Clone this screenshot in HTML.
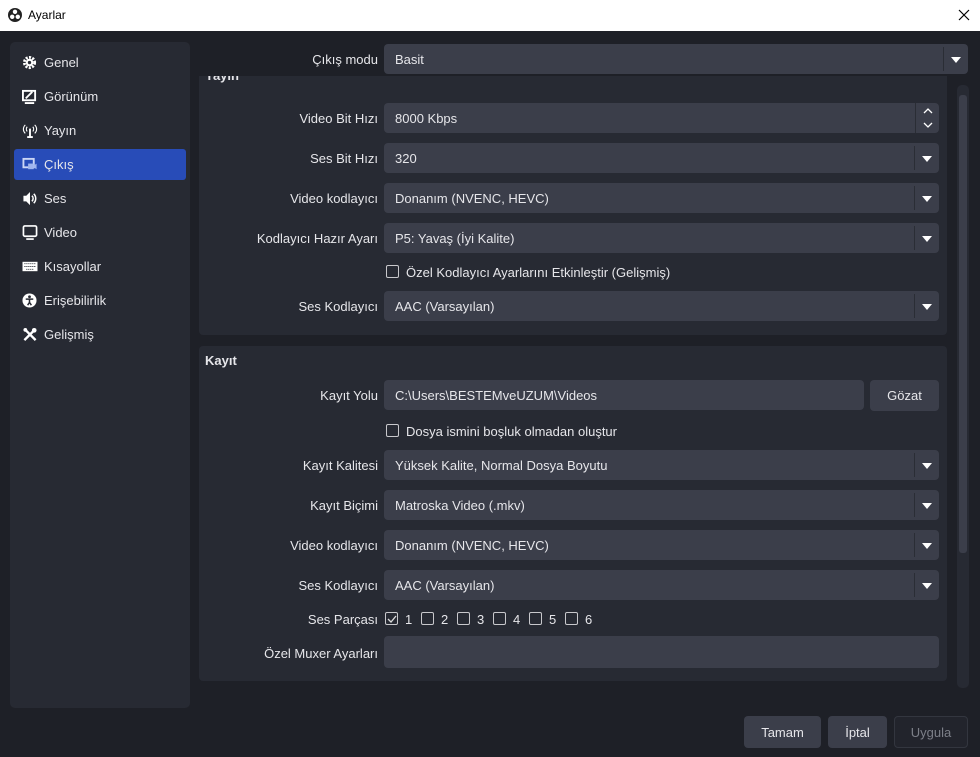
<!DOCTYPE html>
<html><head><meta charset="utf-8"><style>
*{box-sizing:border-box;margin:0;padding:0}
body{width:980px;height:757px;overflow:hidden;background:#1e2027;font-family:"Liberation Sans","DejaVu Sans",sans-serif;font-size:13px;color:#e6e6ea;position:relative}
.a{position:absolute}
.title{left:0;top:0;width:980px;height:31px;background:#fff;color:#000;font-size:12px}
.side{left:10px;top:42px;width:180px;height:666px;background:#272a33;border-radius:5px}
.item{position:absolute;left:4px;width:172px;height:31px;border-radius:3px;line-height:31px;padding-left:30px;font-size:13px}
.item svg{position:absolute;left:8px;top:8px}
.sel{background:#284cb8}
.lbl{position:absolute;right:602px;text-align:right;white-space:nowrap;margin-top:1px}
.in{position:absolute;left:384px;width:555px;height:30px;background:#3b3e4a;border-radius:4px;line-height:31px;padding-left:11px;white-space:nowrap}
.dd::after{content:"";position:absolute;right:0;top:3px;width:24px;height:24px;border-left:1px solid #2a2d35}
.dd::before{content:"";position:absolute;right:7px;top:13px;border-left:5px solid transparent;border-right:5px solid transparent;border-top:6px solid #fff}
.grp{background:#272a33;border-radius:4px}
.cb{position:absolute;width:13px;height:13px;border:1px solid #c8c8cc;border-radius:2px}
.btn{position:absolute;height:32px;top:716px;background:#3b3e4a;border-radius:4px;text-align:center;line-height:33px}
</style></head><body>
<div class="a title">
<svg class="a" style="left:8px;top:8px" width="14" height="14" viewBox="0 0 14 14"><circle cx="7" cy="7" r="7" fill="#222"/><circle cx="7" cy="3.8" r="2.2" fill="#fff"/><circle cx="4.2" cy="8.8" r="2.2" fill="#fff"/><circle cx="9.8" cy="8.8" r="2.2" fill="#fff"/></svg>
<span class="a" style="left:28px;top:8px">Ayarlar</span>
<svg class="a" style="left:958px;top:9px" width="12" height="12"><path d="M1 1L11 11M11 1L1 11" stroke="#000" stroke-width="1.2"/></svg>
</div>

<div class="a side">
<div class="item" style="top:5px"><svg width="15" height="15" viewBox="0 0 16 16"><circle cx="8" cy="8" r="5.5" fill="none" stroke="#fff" stroke-width="3" stroke-dasharray="2.2 1.4"/><circle cx="8" cy="8" r="4" fill="#fff"/><circle cx="8" cy="8" r="1.8" fill="#272a33"/></svg>Genel</div>
<div class="item" style="top:39px"><svg width="15" height="15" viewBox="0 0 16 16"><rect x="1" y="2" width="13" height="10" fill="none" stroke="#fff" stroke-width="2"/><path d="M4 10L11 3" stroke="#fff" stroke-width="2"/><path d="M3 15h10" stroke="#fff" stroke-width="2"/></svg>Görünüm</div>
<div class="item" style="top:73px"><svg width="16" height="15" viewBox="0 0 16 16"><path d="M8 6v9M5 15h6" stroke="#fff" stroke-width="2"/><path d="M5 4a4 4 0 0 0 0 5M11 4a4 4 0 0 1 0 5M3 2a6 6 0 0 0 0 9M13 2a6 6 0 0 1 0 9" fill="none" stroke="#fff" stroke-width="1.2"/></svg>Yayın</div>
<div class="item sel" style="top:107px"><svg width="16" height="15" viewBox="0 0 16 16"><rect x="1" y="2" width="11" height="9" fill="none" stroke="#cbd6f5" stroke-width="2"/><rect x="6" y="7" width="6" height="6" fill="#9fb4ee"/><path d="M12 9l3-2v6l-3-2z" fill="#9fb4ee"/></svg>Çıkış</div>
<div class="item" style="top:141px"><svg width="16" height="15" viewBox="0 0 16 16"><path d="M1 5h3l4-4v14l-4-4H1z" fill="#fff"/><path d="M10 5a4 4 0 0 1 0 6M12 3a7 7 0 0 1 0 10" fill="none" stroke="#fff" stroke-width="1.6"/></svg>Ses</div>
<div class="item" style="top:175px"><svg width="16" height="15" viewBox="0 0 16 16"><rect x="1" y="1" width="14" height="11" rx="1.5" fill="none" stroke="#fff" stroke-width="1.8"/><path d="M4 15h8" stroke="#fff" stroke-width="1.8"/></svg>Video</div>
<div class="item" style="top:209px"><svg width="16" height="15" viewBox="0 0 16 16"><rect x="0" y="3" width="16" height="10" fill="#fff"/><path d="M2 5h12M2 8h12M4 11h8" stroke="#272a33" stroke-width="1" stroke-dasharray="1.2 0.9"/></svg>Kısayollar</div>
<div class="item" style="top:243px"><svg width="15" height="15" viewBox="0 0 16 16"><circle cx="8" cy="8" r="7.5" fill="#fff"/><circle cx="8" cy="4" r="1.5" fill="#272a33"/><path d="M4 6.5h8M8 6.5v3.5M8 10l-2 3M8 10l2 3" stroke="#272a33" stroke-width="1.6"/></svg>Erişebilirlik</div>
<div class="item" style="top:277px"><svg width="16" height="15" viewBox="0 0 16 16"><path d="M2 14L12 4M3 3l11 11" stroke="#fff" stroke-width="2.5"/><circle cx="12.5" cy="3.5" r="2.5" fill="#fff"/><circle cx="3" cy="3" r="2" fill="#fff"/></svg>Gelişmiş</div>
</div>

<div class="lbl" style="top:51px">Çıkış modu</div>
<div class="in dd" style="top:44px;width:584px">Basit</div>

<div class="a" style="left:193px;top:76px;width:777px;height:618px;overflow:hidden">
 <div class="a grp" style="left:6px;top:-10px;width:748px;height:269px"></div>
 <div class="a" style="left:12px;top:-8px;font-weight:bold">Yayın</div>
 <div class="a grp" style="left:6px;top:270px;width:748px;height:335px"></div>
 <div class="a" style="left:764px;top:9px;width:12px;height:603px;background:#272a33;border-radius:5px"></div>
 <div class="a" style="left:766px;top:19px;width:8px;height:458px;background:#3b3e4a;border-radius:3px"></div>
</div>

<div class="lbl" style="top:110px">Video Bit Hızı</div>
<div class="in" style="top:103px">8000 Kbps
 <div class="a" style="right:0;top:0;width:24px;height:30px;border-left:1px solid #2a2d35"><svg class="a" style="left:6px;top:4px" width="12" height="22"><path d="M2 6l4-4 4 4M2 16l4 4 4-4" fill="none" stroke="#fff" stroke-width="1.3"/></svg></div></div>
<div class="lbl" style="top:150px">Ses Bit Hızı</div><div class="in dd" style="top:143px">320</div>
<div class="lbl" style="top:190px">Video kodlayıcı</div><div class="in dd" style="top:183px">Donanım (NVENC, HEVC)</div>
<div class="lbl" style="top:230px">Kodlayıcı Hazır Ayarı</div><div class="in dd" style="top:223px">P5: Yavaş (İyi Kalite)</div>
<div class="cb" style="left:386px;top:265px"></div><div class="a" style="left:406px;top:265px">Özel Kodlayıcı Ayarlarını Etkinleştir (Gelişmiş)</div>
<div class="lbl" style="top:298px">Ses Kodlayıcı</div><div class="in dd" style="top:291px">AAC (Varsayılan)</div>

<div class="a" style="left:205px;top:353px;font-weight:bold">Kayıt</div>
<div class="lbl" style="top:387px">Kayıt Yolu</div><div class="in" style="top:380px;width:480px">C:\Users\BESTEMveUZUM\Videos</div>
<div class="btn" style="left:870px;top:380px;width:69px;height:31px;line-height:32px">Gözat</div>
<div class="cb" style="left:386px;top:424px"></div><div class="a" style="left:406px;top:424px">Dosya ismini boşluk olmadan oluştur</div>
<div class="lbl" style="top:457px">Kayıt Kalitesi</div><div class="in dd" style="top:450px">Yüksek Kalite, Normal Dosya Boyutu</div>
<div class="lbl" style="top:497px">Kayıt Biçimi</div><div class="in dd" style="top:490px">Matroska Video (.mkv)</div>
<div class="lbl" style="top:537px">Video kodlayıcı</div><div class="in dd" style="top:530px">Donanım (NVENC, HEVC)</div>
<div class="lbl" style="top:577px">Ses Kodlayıcı</div><div class="in dd" style="top:570px">AAC (Varsayılan)</div>
<div class="lbl" style="top:611px">Ses Parçası</div>
<div class="cb" style="left:385px;top:612px"><svg class="a" style="left:1px;top:1px" width="10" height="10"><path d="M1 5l3 3 5-6" fill="none" stroke="#ddd" stroke-width="1.3"/></svg></div><div class="a" style="left:405px;top:612px">1</div>
<div class="cb" style="left:421px;top:612px"></div><div class="a" style="left:441px;top:612px">2</div>
<div class="cb" style="left:457px;top:612px"></div><div class="a" style="left:477px;top:612px">3</div>
<div class="cb" style="left:493px;top:612px"></div><div class="a" style="left:513px;top:612px">4</div>
<div class="cb" style="left:529px;top:612px"></div><div class="a" style="left:549px;top:612px">5</div>
<div class="cb" style="left:565px;top:612px"></div><div class="a" style="left:585px;top:612px">6</div>
<div class="lbl" style="top:645px">Özel Muxer Ayarları</div><div class="in" style="top:636px;height:32px"></div>

<div class="btn" style="left:744px;width:77px">Tamam</div>
<div class="btn" style="left:828px;width:59px">İptal</div>
<div class="btn" style="left:894px;width:74px;background:#22242c;border:1px solid #33363f;color:#7c7f88;line-height:31px">Uygula</div>
</body></html>
